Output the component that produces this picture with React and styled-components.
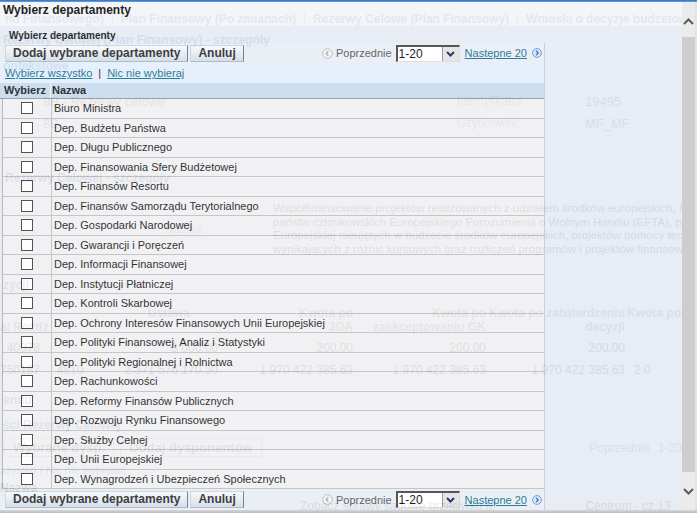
import React from "react";
import styled, { createGlobalStyle } from "styled-components";

const GlobalStyle = createGlobalStyle`
  html, body {
    margin: 0;
    padding: 0;
    background: #fff;
    overflow: hidden;
  }
  body {
    font-family: "Liberation Sans", Arial, sans-serif;
  }
`;

const departments = [
  "Biuro Ministra",
  "Dep. Budżetu Państwa",
  "Dep. Długu Publicznego",
  "Dep. Finansowania Sfery Budżetowej",
  "Dep. Finansów Resortu",
  "Dep. Finansów Samorządu Terytorialnego",
  "Dep. Gospodarki Narodowej",
  "Dep. Gwarancji i Poręczeń",
  "Dep. Informacji Finansowej",
  "Dep. Instytucji Płatniczej",
  "Dep. Kontroli Skarbowej",
  "Dep. Ochrony Interesów Finansowych Unii Europejskiej",
  "Dep. Polityki Finansowej, Analiz i Statystyki",
  "Dep. Polityki Regionalnej i Rolnictwa",
  "Dep. Rachunkowości",
  "Dep. Reformy Finansów Publicznych",
  "Dep. Rozwoju Rynku Finansowego",
  "Dep. Służby Celnej",
  "Dep. Unii Europejskiej",
  "Dep. Wynagrodzeń i Ubezpieczeń Społecznych",
];

/* ---------- frame ---------- */

const Screen = styled.div`
  width: 697px;
  height: 513px;
  display: flex;
  flex-direction: column;
  overflow: hidden;
  background: #fff;
`;

const TopLine = styled.div`
  height: 2px;
  background: linear-gradient(#2f70ba, #6aa3df);
`;

const Middle = styled.div`
  display: flex;
  height: 508px;
`;

const BottomEdge = styled.div`
  height: 3px;
  background: linear-gradient(#d6d6d6, #bdbdbd);
`;

const Stage = styled.div`
  position: relative;
  flex: 1;
  overflow: hidden;
`;

/* ---------- page behind the dialog ---------- */

const BackPage = styled.div`
  display: flex;
  flex-direction: column;
  height: 100%;
  font-size: 12px;
  color: #666;
  background: #fff;
  white-space: nowrap;
`;

const GTabs = styled.div`
  display: flex;
  margin-top: 10px;
  height: 14px;
  line-height: 14px;
  font-weight: bold;
  color: #8090a4;
`;

const GTab = styled.div`
  padding: 0 8px 0 ${(p) => (p.$first ? 5 : 8)}px;
  border-right: 1px solid #a8b6c8;
`;

const GHeading = styled.div`
  margin-top: ${(p) => p.$top}px;
  padding-left: ${(p) => p.$left || 3}px;
  line-height: 16px;
  font-size: 12px;
  font-weight: bold;
  color: #6688aa;
`;

const GInfo = styled.div`
  display: grid;
  grid-template-columns: 43px 414px 128px 1fr;
  grid-auto-rows: 22px;
  margin-top: 16px;
  align-items: center;
`;

const GLabel = styled.div`
  font-size: 12px;
  color: #aaa;
`;

const GValue = styled.div`
  font-size: 13px;
  color: #888;
`;

const GDesc = styled.div`
  display: grid;
  grid-template-columns: 165px 108px 1fr;
  margin-top: 16px;
  align-items: center;
`;

const GPara = styled.div`
  font-size: 11.5px;
  line-height: 13.5px;
`;

const GTable = styled.div`
  display: grid;
  grid-template-columns: 50px 70px 100px 135px 133px 139px 1fr;
  margin-top: 13px;
`;

const GTh = styled.div`
  padding: 0 2px 3px 0;
  line-height: 14px;
  font-weight: bold;
  color: #999;
  text-align: ${(p) => p.$align || "right"};
  white-space: pre;
  overflow: hidden;
`;

const GTd = styled.div`
  padding-right: 2px;
  line-height: 22px;
  text-align: ${(p) => p.$align || "right"};
  overflow: hidden;
`;

const GToolbar = styled.div`
  display: flex;
  align-items: center;
  height: 19px;
  margin-top: 5px;
  padding-left: 4px;
`;

const GButton = styled.div`
  margin-left: ${(p) => p.$left || 0}px;
  padding: 0 8px;
  border: 1px solid #bcc6d2;
  line-height: 17px;
  font-weight: bold;
  font-size: 13px;
  color: #888;
`;

const GPager = styled.div`
  margin-left: auto;
  display: flex;
  gap: 8px;
  color: #999;
`;

const GLinks = styled.div`
  margin-top: 6px;
  line-height: 14px;
  font-size: 11px;
  color: #6aa0b8;
`;

const GRow = styled.div`
  display: flex;
  gap: 90px;
  margin-top: 4px;
  line-height: 14px;
  padding-left: ${(p) => p.$left || 0}px;
  font-weight: ${(p) => (p.$bold ? "bold" : "normal")};
`;

/* ---------- dialog ---------- */

const Dialog = styled.div`
  position: absolute;
  inset: 0;
  display: flex;
  flex-direction: column;
  opacity: 0.87;
  background: #e4eaf4;
  font-size: 11px;
  color: #111;
`;

const TitleBar = styled.div`
  height: 24px;
  padding-left: 3px;
  line-height: 16px;
  font-size: 12px;
  font-weight: bold;
  color: #000;
  background: #f2f4f9;
`;

const Caption = styled.div`
  height: 17px;
  box-sizing: border-box;
  padding: 3px 0 0 9px;
  line-height: 14px;
  font-size: 10px;
  font-weight: bold;
  color: #111;
`;

const PanelBody = styled.div`
  width: 545px;
  flex: 1;
  display: flex;
  flex-direction: column;
  box-sizing: border-box;
  border-right: 1px solid #c4c9d1;
`;

const ActionBar = styled.div`
  height: ${(p) => p.$h}px;
  display: flex;
  align-items: center;
  padding: 0 2px 0 5px;
  gap: 2px;
  background: #e8edf5;
`;

const Button = styled.button`
  height: 17px;
  padding: 0 7px;
  margin: 0;
  font-family: "Liberation Sans", Arial, sans-serif;
  font-size: 12px;
  font-weight: bold;
  line-height: 15px;
  color: #222;
  background: linear-gradient(#f7f9fc, #d0dbe7);
  border: 1px solid #c6d1dd;
  border-right-color: #68717c;
  border-bottom-color: #a6b2bf;
  border-radius: 0;
`;

const Pager = styled.div`
  margin-left: auto;
  display: flex;
  align-items: center;
`;

const PagerText = styled.span`
  margin: 0 4px 0 3px;
  color: #505050;
  font-size: 11px;
`;

const Select = styled.div`
  display: flex;
  width: 64px;
  height: 17px;
  box-sizing: border-box;
  background: #fff;
  border-top: 2px solid #3e3e3e;
  border-left: 2px solid #3e3e3e;
  border-right: 1px solid #d8d8d8;
  border-bottom: 1px solid #d8d8d8;
`;

const SelectValue = styled.span`
  flex: 1;
  padding-left: 1px;
  font-size: 12px;
  line-height: 14px;
  color: #000;
`;

const SelectButton = styled.span`
  width: 16px;
  display: flex;
  align-items: center;
  justify-content: center;
  background: #e2e2e2;
  border-left: 1px solid #8d8d8d;
`;

const Link = styled.a`
  color: #0b6a8b;
  text-decoration: underline;
  font-size: 11px;
  cursor: pointer;
`;

const NextLink = styled(Link)`
  margin: 0 5px 0 5px;
`;

const SelectBar = styled.div`
  height: 20px;
  display: flex;
  align-items: center;
  padding-left: 5px;
  background: #e2eefc;
`;

const Divider = styled.span`
  margin: 0 6px;
  color: #111;
`;

const HeaderRow = styled.div`
  height: 15px;
  display: flex;
  background: #c4d9ed;
  border-bottom: 1px solid #8f9298;
  font-weight: bold;
  line-height: 15px;
`;

const HeadCell = styled.div`
  width: ${(p) => p.$w || "auto"};
  flex: ${(p) => (p.$w ? "none" : 1)};
  padding-left: ${(p) => p.$pad}px;
  box-sizing: border-box;
  border-right: ${(p) => (p.$w ? "1px solid #eef3f9" : "none")};
`;

const Rows = styled.div`
  height: 390px;
  display: flex;
  flex-direction: column;
`;

const Row = styled.div`
  height: 18.5px;
  margin-left: 2px;
  display: flex;
  align-items: center;
  background: #f0f0f2;
  border-left: 1px solid #a9adb3;
  border-bottom: 1px solid #bcbec3;
`;

const CheckCell = styled.div`
  width: 48px;
  height: 100%;
  display: flex;
  align-items: center;
  justify-content: center;
  border-right: 1px solid #bcbec3;
`;

const Check = styled.span`
  width: 10px;
  height: 10px;
  border: 1px solid #3a3a3a;
  background: #fdfdfd;
`;

const NameCell = styled.div`
  padding-left: 2px;
  white-space: nowrap;
  color: #111;
`;

const Scrollbar = styled.div`
  width: 13px;
  display: flex;
  flex-direction: column;
  background: #ebebeb;
  border-right: 2px solid #dde4ed;
`;

const ScrollButton = styled.div`
  height: ${(p) => (p.$h ? `${p.$h}px` : "auto")};
  flex: ${(p) => (p.$h ? "none" : 1)};
  display: flex;
  justify-content: center;
  padding-top: 16px;
  box-sizing: border-box;
`;

const Thumb = styled.div`
  height: 435px;
  background: #cdcdcd;
`;

/* ---------- icons ---------- */

const PrevIcon = () => (
  <svg width="11" height="11" viewBox="0 0 11 11">
    <circle cx="5.5" cy="5.5" r="4.8" fill="#f4f4f4" stroke="#b4b4b4" />
    <path d="M6.4 3.2 L4.2 5.5 L6.4 7.8" fill="none" stroke="#a6a6a6" strokeWidth="1.4" />
  </svg>
);

const NextIcon = () => (
  <svg width="10" height="10" viewBox="0 0 10 10">
    <circle cx="5" cy="5" r="4.4" fill="#d8e6f8" stroke="#5b8dd3" />
    <path d="M4 2.8 L6.2 5 L4 7.2" fill="none" stroke="#2d63bd" strokeWidth="1.4" />
  </svg>
);

const SelectArrow = () => (
  <svg width="9" height="6" viewBox="0 0 9 6">
    <path d="M1 1 L4.5 4.5 L8 1" fill="none" stroke="#0b1f55" strokeWidth="2" />
  </svg>
);

const Chevron = ({ up }) => (
  <svg width="11" height="7" viewBox="0 0 11 7">
    <path d={up ? "M1 6 L5.5 1.5 L10 6" : "M1 1 L5.5 5.5 L10 1"} fill="none" stroke="#5a5a5a" strokeWidth="2" />
  </svg>
);

/* ---------- parts ---------- */

const Toolbar = ({ h }) => (
  <ActionBar $h={h}>
    <Button>Dodaj wybrane departamenty</Button>
    <Button>Anuluj</Button>
    <Pager>
      <PrevIcon />
      <PagerText>Poprzednie</PagerText>
      <Select>
        <SelectValue>1-20</SelectValue>
        <SelectButton>
          <SelectArrow />
        </SelectButton>
      </Select>
      <NextLink>Nastepne 20</NextLink>
      <NextIcon />
    </Pager>
  </ActionBar>
);

const PageBehind = () => (
  <BackPage>
    <GTabs>
      <GTab $first>nu Finansowego)</GTab>
      <GTab>Plan Finansowy (Po zmianach)</GTab>
      <GTab>Rezerwy Celowe (Plan Finansowy)</GTab>
      <GTab>Wnioski o decyzje budżetowe</GTab>
    </GTabs>
    <GHeading $top={6}>Rezerwy Celowej (Plan Finansowy) - szczegóły</GHeading>
    <GHeading $top={10} $left={0}>ontekstowe</GHeading>
    <GInfo>
      <span />
      <GValue>8B - Rezerwy celowe</GValue>
      <GLabel>Identyfikator</GLabel>
      <GValue>19495</GValue>
      <span />
      <GValue>8B</GValue>
      <GLabel>Użytkownik</GLabel>
      <GValue>MF_MF</GValue>
    </GInfo>
    <GHeading $top={36} $left={5}>Rezerwy Celowej - szczegóły</GHeading>
    <GDesc>
      <span />
      <GLabel>Nazwa</GLabel>
      <GPara>
        Współfinansowanie projektów realizowanych z udziałem środków europejskich, finansowanie
        <br />
        państw członkowskich Europejskiego Porozumienia o Wolnym Handlu (EFTA), projektów
        <br />
        Europejskiej nieujętych w budżecie środków europejskich, projektów pomocy technicznej
        <br />
        wynikających z różnic kursowych oraz rozliczeń programów i projektów finansowanych
      </GPara>
    </GDesc>
    <GHeading $top={21} $left={0}>zycji</GHeading>
    <GTable>
      <GTh $align="left">{"\nal Rozdz"}</GTh>
      <GTh />
      <GTh $align="center">{"Ustawa\n"}</GTh>
      <GTh>{"Kwota po\n3DA"}</GTh>
      <GTh>{"Kwota po\nzaakceptowaniu GK"}</GTh>
      <GTh>{"Kwota po zatwierdzeniu\ndecyzji"}</GTh>
      <GTh $align="left">{"Kwota po uw\n"}</GTh>
      <GTd $align="left">&nbsp;&nbsp;40078</GTd>
      <GTd />
      <GTd>3 000.00</GTd>
      <GTd>200.00</GTd>
      <GTd>200.00</GTd>
      <GTd>200.00</GTd>
      <GTd />
      <GTd $align="left">750187</GTd>
      <GTd $align="left">&nbsp;&nbsp;4810</GTd>
      <GTd>2 371 576 170.30</GTd>
      <GTd>1 970 422 385.63</GTd>
      <GTd>1 970 422 385.63</GTd>
      <GTd>1 970 422 385.63</GTd>
      <GTd $align="left">&nbsp;&nbsp;2 0</GTd>
    </GTable>
    <GHeading $top={11} $left={0}>endu</GHeading>
    <GHeading $top={9} $left={0}>ści Rezerwy Celowej</GHeading>
    <GToolbar>
      <GButton>Wybrane dysp.</GButton>
      <GButton $left={6}>Dodaj dysponentów</GButton>
      <GPager>
        <span>Poprzednie</span>
        <span>1-20</span>
      </GPager>
    </GToolbar>
    <GLinks>szystko | Nic nie wybierać</GLinks>
    <GRow $bold>Nazwa</GRow>
    <GRow $left={300}>
      <span>Zobacz sprawy sądowe przeciwko M</span>
      <span>Centrum - cz.13</span>
    </GRow>
  </BackPage>
);

const App = () => {
  return (
    <Screen>
      <GlobalStyle />
      <TopLine />
      <Middle>
        <Stage>
          <PageBehind />
          <Dialog>
            <TitleBar>Wybierz departamenty</TitleBar>
            <Caption>Wybierz departamenty</Caption>
            <PanelBody>
              <Toolbar h={20} />
              <SelectBar>
                <Link>Wybierz wszystko</Link>
                <Divider>|</Divider>
                <Link>Nic nie wybieraj</Link>
              </SelectBar>
              <HeaderRow>
                <HeadCell $w="51px" $pad={4}>Wybierz</HeadCell>
                <HeadCell $pad={1}>Nazwa</HeadCell>
              </HeaderRow>
              <Rows>
                {departments.map((name) => (
                  <Row key={name}>
                    <CheckCell>
                      <Check />
                    </CheckCell>
                    <NameCell>{name}</NameCell>
                  </Row>
                ))}
              </Rows>
              <Toolbar h={21} />
            </PanelBody>
          </Dialog>
        </Stage>
        <Scrollbar>
          <ScrollButton $h={35}>
            <Chevron up />
          </ScrollButton>
          <Thumb />
          <ScrollButton>
            <Chevron />
          </ScrollButton>
        </Scrollbar>
      </Middle>
      <BottomEdge />
    </Screen>
  );
};

export default App;
